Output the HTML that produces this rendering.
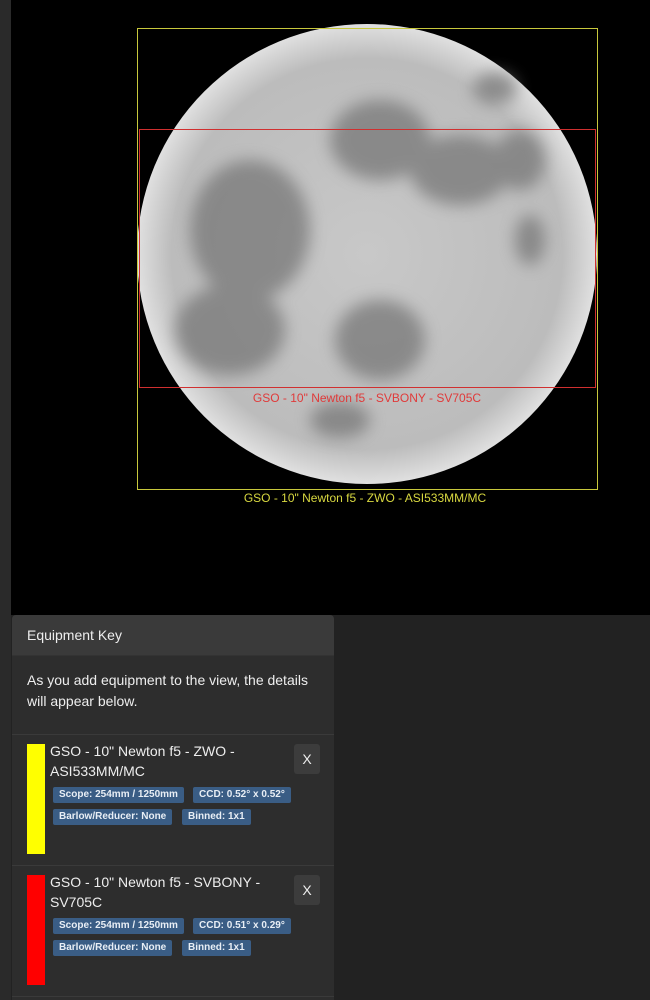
<!DOCTYPE html>
<html><head><style>
body{margin:0;width:650px;height:1000px;background:#222;font-family:"Liberation Sans",sans-serif;position:relative;overflow:hidden}
.strip{position:absolute;left:0;top:0;width:11px;height:1000px;background:#2a2a2a}
.sky{position:absolute;left:11px;top:0;width:639px;height:615px;background:#000;overflow:hidden}
.panel{position:absolute;left:12px;top:615px;width:322px;height:385px;background:#2d2d2d;border-radius:4px 4px 0 0;color:#eee}
.hd{height:40px;background:#3a3a3a;border-radius:4px 4px 0 0;font-size:14px;line-height:40px;padding-left:15px;border-bottom:1px solid #333}
.intro{padding:14px 15px;font-size:14px;line-height:21px;height:50px;border-bottom:1px solid #3a3a3a}
.item{position:relative;height:130px;border-bottom:1px solid #3a3a3a}
.bar{position:absolute;left:15px;top:9px;width:18px;height:110px}
.t{position:absolute;left:38px;top:6px;font-size:14px;line-height:20px;width:220px}
.x{position:absolute;left:282px;top:9px;width:26px;height:30px;background:#3c3c3c;border-radius:3px;font-size:14px;text-align:center;line-height:30px}
.b{position:absolute;background:#3a5d85;color:#e8eef5;font-size:10px;font-weight:bold;height:16px;line-height:16px;padding:0 6px;border-radius:2px}
</style></head><body>
<div class="strip"></div>
<div class="sky">
<svg width="650" height="615" style="position:absolute;left:-11px;top:0" viewBox="0 0 650 615">
<defs><radialGradient id="g" cx="0.5" cy="0.5" r="0.5"><stop offset="0" stop-color="#c8c8c8"/><stop offset="0.85" stop-color="#bcbcbc"/><stop offset="1" stop-color="#e0e0e0"/></radialGradient><filter id="f"><feGaussianBlur stdDeviation="8"/></filter></defs>
<circle cx="367" cy="254" r="230" fill="url(#g)"/>
<g fill="#777" opacity="0.75" filter="url(#f)">
<ellipse cx="250" cy="230" rx="60" ry="70"/><ellipse cx="230" cy="330" rx="55" ry="45"/>
<ellipse cx="380" cy="140" rx="50" ry="40"/><ellipse cx="460" cy="170" rx="50" ry="35"/>
<ellipse cx="380" cy="340" rx="45" ry="40"/><ellipse cx="520" cy="160" rx="25" ry="30"/>
<ellipse cx="495" cy="88" rx="22" ry="16"/><ellipse cx="340" cy="420" rx="30" ry="18"/>
<ellipse cx="530" cy="240" rx="15" ry="25"/>
</g>
<rect x="137.5" y="28.5" width="460" height="461" fill="none" stroke="#c8c83c" stroke-width="1"/>
<rect x="139.5" y="129.5" width="456" height="258" fill="none" stroke="#d03030" stroke-width="1"/>
<text x="367" y="402" fill="#e03a3a" font-size="12" text-anchor="middle" font-family="Liberation Sans">GSO - 10" Newton f5 - SVBONY - SV705C</text>
<text x="365" y="502" fill="#d8d840" font-size="12" text-anchor="middle" font-family="Liberation Sans">GSO - 10" Newton f5 - ZWO - ASI533MM/MC</text>
</svg>
</div>
<div class="panel">
<div class="hd">Equipment Key</div>
<div class="intro">As you add equipment to the view, the details will appear below.</div>
<div class="item">
<div class="bar" style="background:#ffff00"></div>
<div class="t">GSO - 10" Newton f5 - ZWO - ASI533MM/MC</div>
<div class="x">X</div>
<div class="b" style="left:41px;top:52px">Scope: 254mm / 1250mm</div>
<div class="b" style="left:181px;top:52px">CCD: 0.52° x 0.52°</div>
<div class="b" style="left:41px;top:74px">Barlow/Reducer: None</div>
<div class="b" style="left:170px;top:74px">Binned: 1x1</div>
</div>
<div class="item">
<div class="bar" style="background:#ff0000"></div>
<div class="t">GSO - 10" Newton f5 - SVBONY - SV705C</div>
<div class="x">X</div>
<div class="b" style="left:41px;top:52px">Scope: 254mm / 1250mm</div>
<div class="b" style="left:181px;top:52px">CCD: 0.51° x 0.29°</div>
<div class="b" style="left:41px;top:74px">Barlow/Reducer: None</div>
<div class="b" style="left:170px;top:74px">Binned: 1x1</div>
</div>
</div>
</body></html>
